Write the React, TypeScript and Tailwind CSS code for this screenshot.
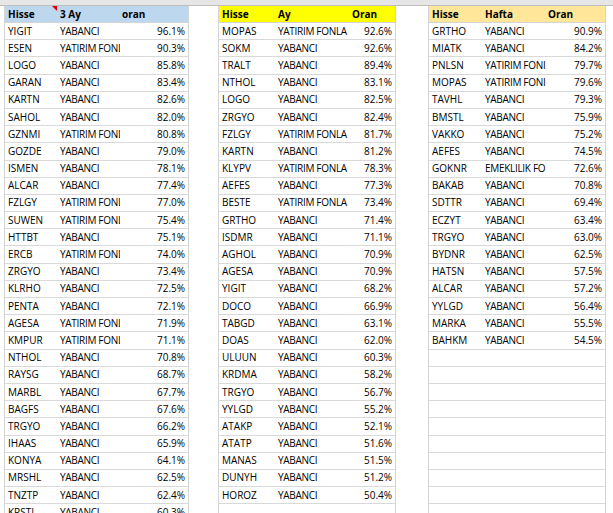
import React from "react";

const Y = "YABANCI";
const t1: [string, string, string][] = [
["YIGIT",Y,"96.1"],["ESEN","YATIRIM FONLAI","90.3"],["LOGO",Y,"85.8"],["GARAN",Y,"83.4"],["KARTN",Y,"82.6"],["SAHOL",Y,"82.0"],["GZNMI","YATIRIM FONLAI","80.8"],["GOZDE",Y,"79.0"],["ISMEN",Y,"78.1"],["ALCAR",Y,"77.4"],["FZLGY","YATIRIM FONLAI","77.0"],["SUWEN","YATIRIM FONLAI","75.4"],["HTTBT",Y,"75.1"],["ERCB","YATIRIM FONLAI","74.0"],["ZRGYO",Y,"73.4"],["KLRHO",Y,"72.5"],["PENTA",Y,"72.1"],["AGESA","YATIRIM FONLAI","71.9"],["KMPUR","YATIRIM FONLAI","71.1"],["NTHOL",Y,"70.8"],["RAYSG",Y,"68.7"],["MARBL",Y,"67.7"],["BAGFS",Y,"67.6"],["TRGYO",Y,"66.2"],["IHAAS",Y,"65.9"],["KONYA",Y,"64.1"],["MRSHL",Y,"62.5"],["TNZTP",Y,"62.4"],["KRSTL",Y,"60.3"]];
const F2="YATIRIM FONLA";
const t2: [string, string, string][] = [
["MOPAS",F2,"92.6"],["SOKM",Y,"92.6"],["TRALT",Y,"89.4"],["NTHOL",Y,"83.1"],["LOGO",Y,"82.5"],["ZRGYO",Y,"82.4"],["FZLGY",F2,"81.7"],["KARTN",Y,"81.2"],["KLYPV",F2,"78.3"],["AEFES",Y,"77.3"],["BESTE",F2,"73.4"],["GRTHO",Y,"71.4"],["ISDMR",Y,"71.1"],["AGHOL",Y,"70.9"],["AGESA",Y,"70.9"],["YIGIT",Y,"68.2"],["DOCO",Y,"66.9"],["TABGD",Y,"63.1"],["DOAS",Y,"62.0"],["ULUUN",Y,"60.3"],["KRDMA",Y,"58.2"],["TRGYO",Y,"56.7"],["YYLGD",Y,"55.2"],["ATAKP",Y,"52.1"],["ATATP",Y,"51.6"],["MANAS",Y,"51.5"],["DUNYH",Y,"51.2"],["HOROZ",Y,"50.4"],["","",""]];
const F3="YATIRIM FONI";
const t3: [string, string, string][] = [
["GRTHO",Y,"90.9"],["MIATK",Y,"84.2"],["PNLSN",F3,"79.7"],["MOPAS",F3,"79.6"],["TAVHL",Y,"79.3"],["BMSTL",Y,"75.9"],["VAKKO",Y,"75.2"],["AEFES",Y,"74.5"],["GOKNR","EMEKLILIK FO","72.6"],["BAKAB",Y,"70.8"],["SDTTR",Y,"69.4"],["ECZYT",Y,"63.4"],["TRGYO",Y,"63.0"],["BYDNR",Y,"62.5"],["HATSN",Y,"57.5"],["ALCAR",Y,"57.2"],["YYLGD",Y,"56.4"],["MARKA",Y,"55.5"],["BAHKM",Y,"54.5"],
...Array.from({length:10},()=>["","",""] as [string,string,string])];

function Table({rows, head, hc, w, c1, c2, tri}:{rows:[string,string,string][];head:string[];hc:string;w:string;c1:string;c2:string;tri?:boolean}) {
  return (
    <div className={`${w} border-r border-l border-[#d4d4d4] shrink-0`}>
      <div className={`relative flex h-[17px] items-center font-bold ${hc} border-b border-[#d4d4d4]`}>
        <div className={`${c1} pl-[3px]`}>{head[0]}</div>
        <div className={`${c2} pl-[2px]`}>{head[1]}</div>
        <div className="flex-1 pl-[2px]">{head[2]}</div>
        {tri && <div className="absolute left-[47px] top-0 w-0 h-0 border-t-[5px] border-t-[#e00000] border-l-[5px] border-l-transparent" />}
      </div>
      {rows.map((r,i)=>(
        <div key={i} className="flex h-[17.2px] items-center border-b border-[#d9d9d9]">
          <div className={`${c1} pl-[3px] whitespace-nowrap overflow-hidden`}>{r[0]}</div>
          <div className={`${c2} pl-[2px] whitespace-nowrap overflow-hidden tracking-[-0.3px]`}>{r[1]}</div>
          <div className="flex-1 text-right pr-[3px]">{r[2] && r[2]+"%"}</div>
        </div>
      ))}
    </div>
  );
}

export default function App() {
  return (
    <div className="w-[613px] h-[513px] overflow-hidden bg-white text-[10px] text-black" style={{fontFamily:'"Open Sans","Liberation Sans",sans-serif'}}>
      <div className="h-[6px] bg-[#e6e6e6] border-b border-[#bfbfbf]" />
      <div className="flex">
        <div className="w-[4px] shrink-0" />
        <Table rows={t1} head={["Hisse","3 Ay","oran"]} hc="bg-[#bdd7ee]" w="w-[185px]" c1="w-[53px]" c2="w-[62px]" tri />
        <div className="w-[29px] shrink-0" />
        <Table rows={t2} head={["Hisse","Ay","Oran"]} hc="bg-[#ffff00]" w="w-[178px]" c1="w-[57px]" c2="w-[74px]" />
        <div className="w-[32px] shrink-0" />
        <Table rows={t3} head={["Hisse","Hafta","Oran"]} hc="bg-[#ffe699]" w="w-[178px]" c1="w-[54px]" c2="w-[63px]" />
      </div>
    </div>
  );
}
